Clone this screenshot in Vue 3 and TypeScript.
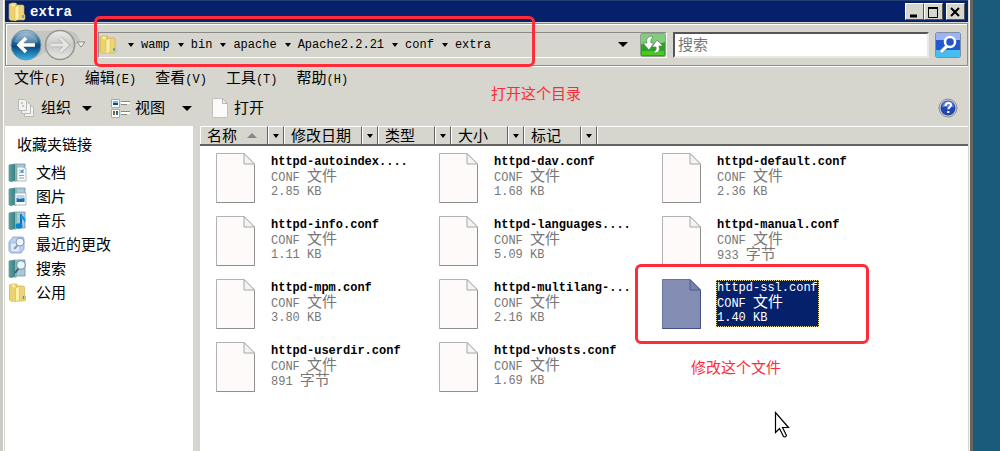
<script setup lang="ts">
interface FileItem {
  name: string
  size: string
  unit?: string
  selected?: boolean
}

const menus = [
  { label: '文件', key: '(F)' },
  { label: '编辑', key: '(E)' },
  { label: '查看', key: '(V)' },
  { label: '工具', key: '(T)' },
  { label: '帮助', key: '(H)' },
]

const crumbs: string[] = ['wamp', 'bin', 'apache', 'Apache2.2.21', 'conf', 'extra']

const links = [
  { label: '文档', icon: 'doc' },
  { label: '图片', icon: 'image' },
  { label: '音乐', icon: 'music' },
  { label: '最近的更改', icon: 'recent' },
  { label: '搜索', icon: 'search' },
  { label: '公用', icon: 'folder' },
]

const columns: string[] = ['名称', '修改日期', '类型', '大小', '标记']

const files: FileItem[] = [
  { name: 'httpd-autoindex....', size: '2.85 KB' },
  { name: 'httpd-dav.conf', size: '1.68 KB' },
  { name: 'httpd-default.conf', size: '2.36 KB' },
  { name: 'httpd-info.conf', size: '1.11 KB' },
  { name: 'httpd-languages....', size: '5.09 KB' },
  { name: 'httpd-manual.conf', size: '933 ', unit: '字节' },
  { name: 'httpd-mpm.conf', size: '3.80 KB' },
  { name: 'httpd-multilang-...', size: '2.16 KB' },
  { name: 'httpd-ssl.conf', size: '1.40 KB', selected: true },
  { name: 'httpd-userdir.conf', size: '891 ', unit: '字节' },
  { name: 'httpd-vhosts.conf', size: '1.69 KB' },
]
</script>

<template>
  <div class="desktop">
    <svg class="defs" width="0" height="0" aria-hidden="true">
      <defs>
        <linearGradient id="gold" x1="0" x2="1">
          <stop offset="0" stop-color="#e2c559" />
          <stop offset=".5" stop-color="#fff2ac" />
          <stop offset="1" stop-color="#dfbd4c" />
        </linearGradient>
        <linearGradient id="teal" x1="0" x2="1">
          <stop offset="0" stop-color="#5aa58c" />
          <stop offset="1" stop-color="#3a7f92" />
        </linearGradient>
        <linearGradient id="blue" x1="0" y1="0" x2="0" y2="1">
          <stop offset="0" stop-color="#a9c4d6" />
          <stop offset=".42" stop-color="#1d5f91" />
          <stop offset=".55" stop-color="#0a4a80" />
          <stop offset="1" stop-color="#35b4e8" />
        </linearGradient>
        <linearGradient id="silver" x1="0" y1="0" x2="0" y2="1">
          <stop offset="0" stop-color="#ececea" />
          <stop offset=".5" stop-color="#c9c9c6" />
          <stop offset="1" stop-color="#e6e6e3" />
        </linearGradient>
        <symbol id="folder" viewBox="0 0 18 20">
          <path d="M1 2l3-1h4l1 2v15l-6 .5L1 17z" fill="url(#gold)" stroke="#c9aa45" stroke-width=".6" />
          <path d="M9 3h6l1 1v8l1 1v4l-1 1H9z" fill="#eed57a" stroke="#c9aa45" stroke-width=".6" />
          <path d="M2 3l5 2v14l-5-2z" fill="#ecd171" />
          <path d="M7 5l4-2v14l-4 2z" fill="#fff0a8" stroke="#d3b04a" stroke-width=".5" />
          <path d="M15 13v3" stroke="#3c9ad0" stroke-width="1.5" />
        </symbol>
        <symbol id="book" viewBox="0 0 19 20">
          <path d="M1 2l6-1h10v16H7l-6 1z" fill="#a9c9d8" stroke="#5b8ba0" stroke-width=".7" />
          <path d="M1 2l6-1v17l-4 1-2-1z" fill="url(#teal)" />
          <path d="M7 1l2 1v16l-2 1z" fill="#7dbca6" />
        </symbol>
        <symbol id="doc" viewBox="0 0 19 20">
          <use href="#book" width="19" height="20" />
          <path d="M9 4h6l3 2v12H9z" fill="#f8fafb" stroke="#8f9faa" stroke-width=".7" />
          <path d="M11 7h1M11 10h1M11 12.500h5M11 15h5M14 7h2" stroke="#8ea0ad" />
          <path d="M12.500 7h3v3h-3z" fill="#4e9ee0" />
        </symbol>
        <symbol id="image" viewBox="0 0 19 20">
          <use href="#book" width="19" height="20" />
          <path d="M7 6h11v12H7z" fill="#fbfcfc" stroke="#8d9da8" stroke-width=".7" />
          <path d="M8.500 8h8v4h-8z" fill="#a9daf3" />
          <path d="M8.500 11l3 1 5-1v4h-8z" fill="#286b9d" />
        </symbol>
        <symbol id="music" viewBox="0 0 19 20">
          <use href="#book" width="19" height="20" />
          <path d="M13 3v11" stroke="#0878c4" stroke-width="2" />
          <path d="M13 2c1 4 6 4 4 10-1-3-2-4-4-4z" fill="#1593dd" />
          <ellipse cx="11" cy="15" rx="3.500" ry="2.800" fill="#0c82d4" />
        </symbol>
        <symbol id="recent" viewBox="0 0 19 20">
          <path d="M5 2h10l1 2v10l-3 4H3l-2-2V7z" fill="#b9d3f5" stroke="#7c9fd2" stroke-width=".8" />
          <path d="M2 8h10v9H3z" fill="#dfebfd" stroke="#8caadd" stroke-width=".6" />
          <path d="M6 14l4-4" stroke="#8f98a8" stroke-width="2" />
          <circle cx="12" cy="7" r="4" fill="#eef6ff" stroke="#8796ae" />
        </symbol>
        <symbol id="search" viewBox="0 0 19 20">
          <use href="#book" width="19" height="20" />
          <path d="M7 14l4-5" stroke="#405d77" stroke-width="2" />
          <circle cx="13" cy="6" r="4.300" fill="#e8f5fc" stroke="#708ba0" />
        </symbol>
        <symbol id="page" viewBox="0 0 39 50">
          <path d="M.5 .5H28L38.500 11v38.500H.5z" fill="#fdfaf9" stroke="#b2b2b2" />
          <path d="M28 .5V11h10.500z" fill="#f4f4f4" stroke="#a6a6a6" />
          <path d="M.5 49.500h38V12" fill="none" stroke="#8e8e8e" />
        </symbol>
        <symbol id="page-selected" viewBox="0 0 39 50">
          <path d="M.5 .5H28L38.500 11v38.500H.5z" fill="#848eb5" stroke="#64739f" />
          <path d="M28 .5V11h10.500z" fill="#7782ac" stroke="#4d5d91" />
          <path d="M.5 49.500h38V12" fill="none" stroke="#405087" />
        </symbol>
      </defs>
    </svg>

    <main class="window">
      <header class="titlebar">
        <svg class="folder-icon"><use href="#folder" /></svg>
        <h1>extra</h1>
        <div class="controls">
          <button type="button" aria-label="最小化">
            <svg width="16" height="14"><path d="M4 11h7" stroke="#000" stroke-width="3" /></svg>
          </button>
          <button type="button" aria-label="最大化">
            <svg width="16" height="14"><path d="M3.500 2v10.500h9V2" fill="none" stroke="#000" /><path d="M3 3h10" stroke="#000" stroke-width="2" /></svg>
          </button>
          <button type="button" class="close" aria-label="关闭">
            <svg width="16" height="14"><path d="M4 3l8 8M12 3l-8 8" stroke="#000" stroke-width="2" /></svg>
          </button>
        </div>
      </header>

      <div class="address">
        <div class="history">
          <svg width="80" height="34" viewBox="0 0 80 34">
            <path d="M15 2h46q10 2 11 14h-4q-2 14-14 15-7 0-12-5-4-3-8 0-5 6-18 5z" fill="#c5c6c1" stroke="#dcdcd8" />
          </svg>
          <button type="button" class="back" aria-label="后退">
            <svg width="32" height="32" viewBox="0 0 32 32">
              <circle cx="16" cy="16" r="15" fill="url(#blue)" stroke="#7393a8" />
              <path d="M4 13a12.500 12.500 0 0 1 24 0q-12 5-24 0z" fill="#fff" opacity=".22" />
              <path d="M25 16H9M16 9l-7 7 7 7" fill="none" stroke="#fff" stroke-width="3.500" />
            </svg>
          </button>
          <button type="button" class="forward" aria-label="前进">
            <svg width="32" height="32" viewBox="0 0 32 32">
              <circle cx="16" cy="16" r="14.500" fill="url(#silver)" stroke="#969793" stroke-width="1.500" />
              <path d="M7 16h16M16 9l7 7-7 7" fill="none" stroke="#b1b2ae" stroke-width="4.500" />
              <path d="M7 16h16M16 9l7 7-7 7" fill="none" stroke="#e5e5e2" stroke-width="3" />
            </svg>
          </button>
          <button type="button" class="recent-pages" aria-label="最近的页面">
            <svg width="10" height="7"><path d="M1 1h8L5 6z" fill="#f4f4f2" stroke="#888" /></svg>
          </button>
        </div>
        <nav class="crumbs" aria-label="地址">
          <svg class="folder-icon"><use href="#folder" /></svg>
          <ol>
            <li v-for="c in crumbs" :key="c">
              <i class="caret small"></i><a href="#">{{ c }}</a>
            </li>
          </ol>
          <button type="button" class="drop" aria-label="以前的位置"><i class="caret large"></i></button>
          <button type="button" class="refresh" aria-label="刷新">
            <svg width="26" height="24" viewBox="0 0 26 24">
              <rect x=".5" y=".5" width="25" height="23" rx="2" fill="#2da22a" stroke="#8ba38a" />
              <path d="M1 1h24v8q-12 5-24 2z" fill="#83cb80" />
              <path d="M2 18h22v4H2z" fill="#48cb1c" />
              <path d="M11 3Q5 5 7 10H3l6 7 5-7h-3q-1-4 2-6zM15 20q6-1 4-7h4l-6-6-5 7h4q1 4-3 5z" fill="#fff" stroke="#51834c" stroke-width=".7" />
            </svg>
          </button>
          <div class="mark mark-path"></div>
        </nav>
        <input class="search" type="text" placeholder="搜索" aria-label="搜索" />
        <button type="button" class="go" aria-label="开始搜索">
          <svg width="26" height="26" viewBox="0 0 26 26">
            <rect x=".5" y=".5" width="25" height="25" rx="2" fill="#2158d0" stroke="#7f8da8" />
            <path d="M1 1h24v7H1z" fill="#9db3f4" />
            <path d="M1 18h24v7H1z" fill="#45bdf0" />
            <path d="M6 20l6-6" stroke="#6a7b9c" stroke-width="4" />
            <path d="M6 20l6-6" stroke="#fff" stroke-width="3" />
            <circle cx="15" cy="10" r="5" fill="#2454cc" stroke="#fff" stroke-width="2.500" />
          </svg>
        </button>
      </div>

      <nav class="menubar" aria-label="菜单">
        <button v-for="m in menus" :key="m.key" type="button"><span class="zh">{{ m.label }}</span>{{ m.key }}</button>
      </nav>

      <div class="toolbar">
        <button type="button" class="organize">
          <svg width="18" height="20" viewBox="0 0 18 20" fill="#f2f2f0" stroke="#b9bab6">
            <path d="M7.500 7.500h6l3 2v9h-9z" /><path d="M4.500 4.500h6l3 2v9h-9z" /><path d="M1.500 1.500h6l2 2v9h-8z" />
            <path d="M4 5h2M5 8h2" stroke="#999" />
          </svg>
          <span class="zh">组织</span><i class="caret large"></i>
        </button>
        <button type="button" class="views">
          <svg width="20" height="19" viewBox="0 0 20 19">
            <path d="M.5 .5h8v8h-8zM.5 10.500h8v8h-8z" fill="#fafafa" stroke="#aaa" />
            <path d="M2 2h5v2H2z" fill="#67bce8" /><path d="M2 4h5v2H2z" fill="#164b83" />
            <path d="M2 12h2v2H2zM5 14h2v2H5z" fill="#208b28" /><path d="M5 12h2v2H5z" fill="#3148e0" /><path d="M2 14h2v2H2z" fill="#e33c2e" />
            <path d="M10 2.500h9M10 12.500h9" stroke="#888" /><path d="M10 4h9M10 14h9" stroke="#fff" stroke-width="2" /><path d="M10 5.500h6M10 15.500h6" stroke="#888" />
          </svg>
          <span class="zh">视图</span><i class="caret large"></i>
        </button>
        <button type="button" class="open">
          <svg width="16" height="20" viewBox="0 0 16 20">
            <path d="M.5 .5h10l5 5v14H.5z" fill="#fdfaf9" stroke="#c2c2c0" />
            <path d="M10.500 .5v5h5z" fill="#eee" stroke="#b5b5b3" />
          </svg>
          <span class="zh">打开</span>
        </button>
        <span class="note note-path">打开这个目录</span>
        <button type="button" class="help" aria-label="帮助">
          <svg width="20" height="20" viewBox="0 0 20 20">
            <circle cx="10" cy="10" r="9" fill="#c6cad5" stroke="#8d8e8d" />
            <circle cx="10" cy="10" r="7.500" fill="#2147b5" />
            <path d="M4 9a6 6 0 0 1 12 0z" fill="#5d82d7" />
            <path d="M7.500 8q0-3 3-3 2.500 0 2.500 2 0 1.500-1.500 2.300-1.200.7-1.200 2" fill="none" stroke="#fff" stroke-width="2" />
            <path d="M9.200 13h2.200v2H9.200z" fill="#fff" />
          </svg>
        </button>
      </div>

      <div class="body">
        <aside class="sidebar">
          <h2>收藏夹链接</h2>
          <ul>
            <li v-for="l in links" :key="l.label">
              <a href="#"><svg width="19" height="20"><use :href="'#' + l.icon" /></svg><span class="zh">{{ l.label }}</span></a>
            </li>
          </ul>
        </aside>

        <section class="content">
          <div class="columns">
            <template v-for="(c, i) in columns" :key="c">
              <button type="button" class="column" :class="{ wide: i === 1, first: i === 0 }">{{ c }}<i v-if="i === 0" class="sort"></i></button>
              <button type="button" class="filter" :aria-label="c + '筛选'"><i class="caret small"></i></button>
            </template>
            <span class="filler"></span>
          </div>
          <ul class="files">
            <li v-for="f in files" :key="f.name" class="file" :class="{ selected: f.selected }">
              <svg width="39" height="50"><use :href="f.selected ? '#page-selected' : '#page'" /></svg>
              <div class="info">
                <strong>{{ f.name }}</strong>
                <span>CONF <span class="zh">文件</span></span>
                <span>{{ f.size }}<span v-if="f.unit" class="zh">{{ f.unit }}</span></span>
              </div>
              <template v-if="f.selected">
                <div class="mark mark-file"></div>
                <span class="note note-file">修改这个文件</span>
                <svg class="pointer" width="18" height="28" viewBox="0 0 18 28">
                  <path d="M1.500 1.500v20l4-4 4 8q2 1 3-1l-4-8h6z" fill="#fff" stroke="#000" stroke-width="1.200" />
                </svg>
              </template>
            </li>
          </ul>
        </section>
      </div>
    </main>
  </div>
</template>

<style>
body {
  background: #1a5a7b;
}
</style>

<style scoped>
* {
  box-sizing: border-box;
}
.desktop {
  padding-right: 27px;
  font: 12px/16px "Liberation Mono", "Noto Sans CJK SC", monospace;
  color: #000;
}
.defs {
  position: absolute;
}
.window {
  display: flex;
  flex-direction: column;
  min-height: 100vh;
  padding: 0 2px;
  background: #d6d6ce;
  border-left: 3px solid #c9cac3;
  border-right: 3px solid #66665f;
  box-shadow: inset 1px 0 #fff, inset -1px 0 #f2f2ee;
}
button {
  padding: 0;
  border: 0;
  background: none;
  font: inherit;
  color: inherit;
}
svg {
  display: block;
  flex: none;
}
ul,
ol {
  margin: 0;
  padding: 0;
  list-style: none;
}
a {
  color: inherit;
  text-decoration: none;
}
.zh {
  font-size: 15px;
}
.folder-icon {
  width: 18px;
  height: 20px;
}
.caret {
  display: block;
  flex: none;
  border: solid transparent;
  border-top-color: #000;
}
.caret.small {
  border-width: 4px 3px 0;
}
.caret.large {
  border-width: 5px 5px 0;
}

.titlebar {
  display: flex;
  align-items: center;
  height: 22px;
  padding: 0 3px;
  border-top: 1px solid #253f72;
  background: #05216b;
  color: #fff;
}
.titlebar h1 {
  flex: 1;
  margin: 0 0 0 4px;
  font-size: 14px;
  line-height: 20px;
}
.controls {
  display: flex;
}
.controls button {
  width: 19px;
  height: 17px;
  border: 1px solid;
  border-color: #fff #55554f #55554f #fff;
  background: #d6d6ce;
}
.controls .close {
  margin-left: 3px;
}

.address {
  display: flex;
  align-items: center;
  height: 43px;
  margin-top: 1px;
  padding-right: 6px;
  border: 1px solid #8c8c88;
  box-shadow: inset 1px 1px #fff, 0 1px #fff;
}
.history {
  display: flex;
  align-items: center;
  position: relative;
  width: 92px;
  height: 34px;
  padding-left: 4px;
}
.history > svg {
  position: absolute;
  left: 3px;
  top: 0;
}
.history button {
  position: relative;
}
.forward {
  margin-left: 2px;
}
.crumbs {
  position: relative;
  display: flex;
  flex: 1;
  align-items: center;
  height: 26px;
  margin-right: 6px;
  border: 1px solid;
  border-color: #8a8a86 #fff #fff #8a8a86;
}
.crumbs ol {
  display: flex;
  flex: 1;
  margin-left: 3px;
}
.crumbs li {
  display: flex;
  align-items: center;
}
.crumbs .small {
  margin: 0 7px 0 8px;
}
.drop {
  padding: 8px 12px 8px 8px;
}
.search {
  width: 256px;
  height: 26px;
  padding: 3px 3px 0;
  border: solid;
  border-width: 2px;
  border-color: #55555c #e8e8e4 #e8e8e4 #55555c;
  border-radius: 0;
  outline: 0;
  background: #fff;
  font: 15px/20px "Liberation Mono", "Noto Sans CJK SC", monospace;
}
.search::placeholder {
  color: #777;
  opacity: 1;
}
.go {
  margin-left: 6px;
}

.menubar {
  display: flex;
  gap: 19px;
  height: 24px;
  padding: 3px 0 0 9px;
}
.menubar button {
  line-height: 22px;
}

.toolbar {
  position: relative;
  display: flex;
  align-items: center;
  height: 36px;
  padding: 0 10px 0 12px;
}
.toolbar button {
  display: flex;
  align-items: center;
}
.toolbar .zh {
  padding-top: 3px;
}
.organize .zh {
  margin: 0 11px 0 6px;
}
.views {
  margin-left: 19px;
}
.views .zh {
  margin: 0 17px 0 4px;
}
.open {
  margin-left: 20px;
}
.open .zh {
  margin-left: 6px;
}
.toolbar .help {
  margin-left: auto;
}

.body {
  display: flex;
  flex: 1;
  gap: 7px;
}
.sidebar {
  width: 188px;
  padding-top: 9px;
  background: #fff;
}
.sidebar h2 {
  margin: 0 0 3px 12px;
  font-size: 15px;
  font-weight: 400;
  line-height: 23px;
}
.sidebar a {
  display: flex;
  gap: 9px;
  align-items: center;
  height: 24px;
  padding-left: 3px;
}
.sidebar .zh {
  padding-top: 3px;
}
.content {
  flex: 1;
  background: #fff;
}
.columns {
  display: flex;
  height: 20px;
  border-bottom: 2px solid #62625f;
  background: #d6d6ce;
}
.columns > * {
  border-top: 1px solid #fff;
  border-left: 1px solid #fff;
}
.column,
.filter {
  border-right: 1px solid #62625f;
}
.column {
  display: flex;
  align-items: center;
  width: 57px;
  padding: 4px 0 0 6px;
  font-size: 15px;
}
.column.first {
  width: 68px;
}
.column.wide {
  width: 78px;
}
.sort {
  margin: 0 0 4px 10px;
  border: solid transparent;
  border-width: 0 5px 5px;
  border-bottom-color: #888;
}
.filter {
  display: grid;
  place-items: center;
  width: 16px;
}
.filler {
  flex: 1;
}
.files {
  display: grid;
  grid-template-columns: repeat(3, 223px);
  grid-auto-rows: 63px;
  padding: 7px 0 0 16px;
}
.file {
  position: relative;
  display: flex;
  gap: 15px;
  align-items: flex-start;
}
.info {
  display: flex;
  flex-direction: column;
  margin-top: 1px;
  padding: 1px;
  color: #777;
  line-height: 15px;
  white-space: pre;
}
.info > * {
  height: 15px;
}
.info strong {
  color: #000;
}
.selected .info {
  outline: 1px dotted #e8dc9a;
  outline-offset: -1px;
  background: #05216b;
  color: #fff;
}
.selected strong {
  color: #fff;
  font-weight: 400;
}

.mark {
  position: absolute;
  border: 3px solid #fd2c38;
  border-radius: 6px;
  pointer-events: none;
}
.mark-path {
  top: -17px;
  left: -5px;
  width: 441px;
  height: 51px;
}
.mark-file {
  top: -15px;
  left: -27px;
  width: 234px;
  height: 80px;
}
.note {
  position: absolute;
  color: #fd2c38;
  font: 15px/20px "Noto Sans CJK SC", sans-serif;
  white-space: nowrap;
}
.note-path {
  top: -7px;
  left: 486px;
}
.note-file {
  top: 78px;
  left: 29px;
}
.pointer {
  position: absolute;
  top: 132px;
  left: 112px;
}
</style>
